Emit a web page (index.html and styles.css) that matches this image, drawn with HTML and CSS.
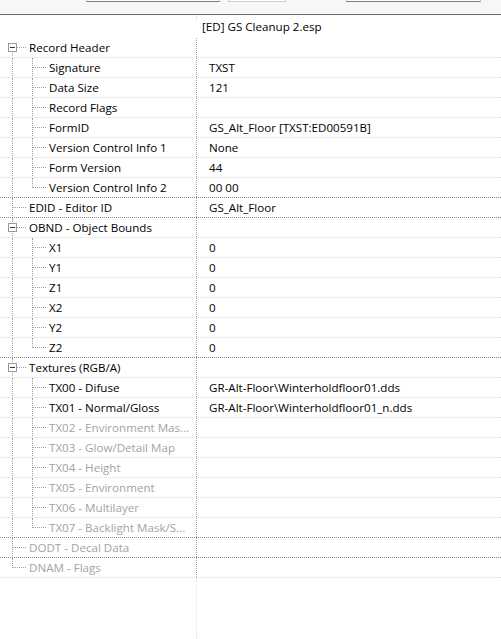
FILE: index.html
```html
<!DOCTYPE html>
<html lang="en">
<head>
    <meta charset="UTF-8">
    <meta name="viewport" content="width=device-width, initial-scale=1.0">
    <title>GS Cleanup 2.esp - Record View</title>
    <link rel="stylesheet" href="styles.css">
</head>
<body>
    <div class="page">
        <div class="toolbar">
            <span class="field f1"></span>
            <span class="field f2"></span>
            <span class="field f3"></span>
        </div>
        <div class="tree">
            <div class="head">
                <div class="name"></div>
                <div class="val">[ED] GS Cleanup 2.esp</div>
            </div>

            <!-- Record Header -->
            <div class="row">
                <div class="name"><span class="g first"><span class="box"></span></span><span class="label">Record Header</span></div>
                <div class="val"></div>
            </div>
            <div class="row">
                <div class="name"><span class="g pipe"></span><span class="g tee"></span><span class="label">Signature</span></div>
                <div class="val">TXST</div>
            </div>
            <div class="row">
                <div class="name"><span class="g pipe"></span><span class="g tee"></span><span class="label">Data Size</span></div>
                <div class="val">121</div>
            </div>
            <div class="row">
                <div class="name"><span class="g pipe"></span><span class="g tee"></span><span class="label">Record Flags</span></div>
                <div class="val"></div>
            </div>
            <div class="row">
                <div class="name"><span class="g pipe"></span><span class="g tee"></span><span class="label">FormID</span></div>
                <div class="val">GS_Alt_Floor [TXST:ED00591B]</div>
            </div>
            <div class="row">
                <div class="name"><span class="g pipe"></span><span class="g tee"></span><span class="label">Version Control Info 1</span></div>
                <div class="val">None</div>
            </div>
            <div class="row">
                <div class="name"><span class="g pipe"></span><span class="g tee"></span><span class="label">Form Version</span></div>
                <div class="val">44</div>
            </div>
            <div class="row last">
                <div class="name"><span class="g pipe"></span><span class="g end"></span><span class="label">Version Control Info 2</span></div>
                <div class="val">00 00</div>
            </div>

            <!-- EDID -->
            <div class="row last">
                <div class="name"><span class="g tee"></span><span class="label">EDID - Editor ID</span></div>
                <div class="val">GS_Alt_Floor</div>
            </div>

            <!-- OBND -->
            <div class="row">
                <div class="name"><span class="g node"><span class="box"></span></span><span class="label">OBND - Object Bounds</span></div>
                <div class="val"></div>
            </div>
            <div class="row">
                <div class="name"><span class="g pipe"></span><span class="g tee"></span><span class="label">X1</span></div>
                <div class="val">0</div>
            </div>
            <div class="row">
                <div class="name"><span class="g pipe"></span><span class="g tee"></span><span class="label">Y1</span></div>
                <div class="val">0</div>
            </div>
            <div class="row">
                <div class="name"><span class="g pipe"></span><span class="g tee"></span><span class="label">Z1</span></div>
                <div class="val">0</div>
            </div>
            <div class="row">
                <div class="name"><span class="g pipe"></span><span class="g tee"></span><span class="label">X2</span></div>
                <div class="val">0</div>
            </div>
            <div class="row">
                <div class="name"><span class="g pipe"></span><span class="g tee"></span><span class="label">Y2</span></div>
                <div class="val">0</div>
            </div>
            <div class="row last">
                <div class="name"><span class="g pipe"></span><span class="g end"></span><span class="label">Z2</span></div>
                <div class="val">0</div>
            </div>

            <!-- Textures -->
            <div class="row">
                <div class="name"><span class="g node"><span class="box"></span></span><span class="label">Textures (RGB/A)</span></div>
                <div class="val"></div>
            </div>
            <div class="row">
                <div class="name"><span class="g pipe"></span><span class="g tee"></span><span class="label">TX00 - Difuse</span></div>
                <div class="val">GR-Alt-Floor\Winterholdfloor01.dds</div>
            </div>
            <div class="row">
                <div class="name"><span class="g pipe"></span><span class="g tee"></span><span class="label">TX01 - Normal/Gloss</span></div>
                <div class="val">GR-Alt-Floor\Winterholdfloor01_n.dds</div>
            </div>
            <div class="row dim">
                <div class="name"><span class="g pipe"></span><span class="g tee"></span><span class="label">TX02 - Environment Mas...</span></div>
                <div class="val"></div>
            </div>
            <div class="row dim">
                <div class="name"><span class="g pipe"></span><span class="g tee"></span><span class="label">TX03 - Glow/Detail Map</span></div>
                <div class="val"></div>
            </div>
            <div class="row dim">
                <div class="name"><span class="g pipe"></span><span class="g tee"></span><span class="label">TX04 - Height</span></div>
                <div class="val"></div>
            </div>
            <div class="row dim">
                <div class="name"><span class="g pipe"></span><span class="g tee"></span><span class="label">TX05 - Environment</span></div>
                <div class="val"></div>
            </div>
            <div class="row dim">
                <div class="name"><span class="g pipe"></span><span class="g tee"></span><span class="label">TX06 - Multilayer</span></div>
                <div class="val"></div>
            </div>
            <div class="row dim last">
                <div class="name"><span class="g pipe"></span><span class="g end"></span><span class="label">TX07 - Backlight Mask/S...</span></div>
                <div class="val"></div>
            </div>

            <!-- DODT / DNAM -->
            <div class="row dim last">
                <div class="name"><span class="g tee"></span><span class="label">DODT - Decal Data</span></div>
                <div class="val"></div>
            </div>
            <div class="row dim">
                <div class="name"><span class="g end"></span><span class="label">DNAM - Flags</span></div>
                <div class="val"></div>
            </div>

            <div class="filler">
                <div class="name"></div>
                <div class="val"></div>
            </div>
        </div>
    </div>
</body>
</html>
```

FILE: styles.css
```css
body {
    margin: 0;
    padding: 0;
    background-color: #ffffff;
    color: #000000;
    font-family: "Open Sans", "Noto Sans", sans-serif;
    font-size: 11.6px;
    overflow: hidden;
}

.page {
    display: flex;
    flex-direction: column;
    height: 100vh;
}

/* strip of the toolbar above the grid */
.toolbar {
    height: 14px;
    flex: none;
    display: flex;
    align-items: flex-start;
    background-color: #f7f7f7;
    border-bottom: 1px solid #6a6a6a;
}

.field {
    height: 1px;
    background-color: #ffffff;
    border: 1px solid #c8c8c8;
    border-top: none;
    border-bottom-color: #7a7a7a;
}

.f1 {
    margin-left: 86px;
    width: 132px;
}

.f2 {
    margin-left: 8px;
    width: 56px;
    border-bottom-color: #cfcfcf;
}

.f3 {
    margin-left: 60px;
    width: 133px;
}

.tree {
    flex: 1;
    display: flex;
    flex-direction: column;
}

.head {
    display: flex;
    height: 23px;
    flex: none;
}

.head .val {
    padding-left: 6px;
    line-height: 23px;
    border-left: none;
    background: linear-gradient(#e3e3e3, #e3e3e3) left top / 1px 5px no-repeat;
}

.row {
    display: flex;
    height: 19px;
    flex: none;
    border-bottom: 1px dotted #dcdcdc;
}

.row.last {
    border-bottom-color: #8a8a8a;
}

.name {
    width: 196px;
    flex: none;
    display: flex;
    overflow: hidden;
}

.val {
    flex: 1;
    border-left: 1px dotted #a0a0a0;
    padding-left: 12px;
    line-height: 19px;
    white-space: nowrap;
}

.label {
    padding-left: 9px;
    line-height: 19px;
    white-space: nowrap;
}

.dim .label {
    color: #a3a3a3;
}

/* tree guide lines */
.g {
    width: 20px;
    flex: none;
    position: relative;
}

.g::before {
    content: "";
    position: absolute;
    left: 12px;
    top: 0;
    bottom: -1px;
    border-left: 1px dotted #a0a0a0;
}

.g.first::before {
    top: 9px;
}

.g.end::before {
    bottom: auto;
    height: 10px;
}

.g.tee::after,
.g.end::after,
.g.node::after,
.g.first::after {
    content: "";
    position: absolute;
    left: 13px;
    top: 9px;
    width: 13px;
    border-top: 1px dotted #a0a0a0;
}

.box {
    position: absolute;
    left: 8px;
    top: 5px;
    width: 7px;
    height: 7px;
    border: 1px solid #999999;
    background-color: #ffffff;
    z-index: 1;
}

.box::before {
    content: "";
    position: absolute;
    left: 1px;
    top: 3px;
    width: 5px;
    height: 1px;
    background-color: #333333;
}

.filler {
    flex: 1;
    display: flex;
}

.filler .val {
    border-left-color: #e3e3e3;
}
```
